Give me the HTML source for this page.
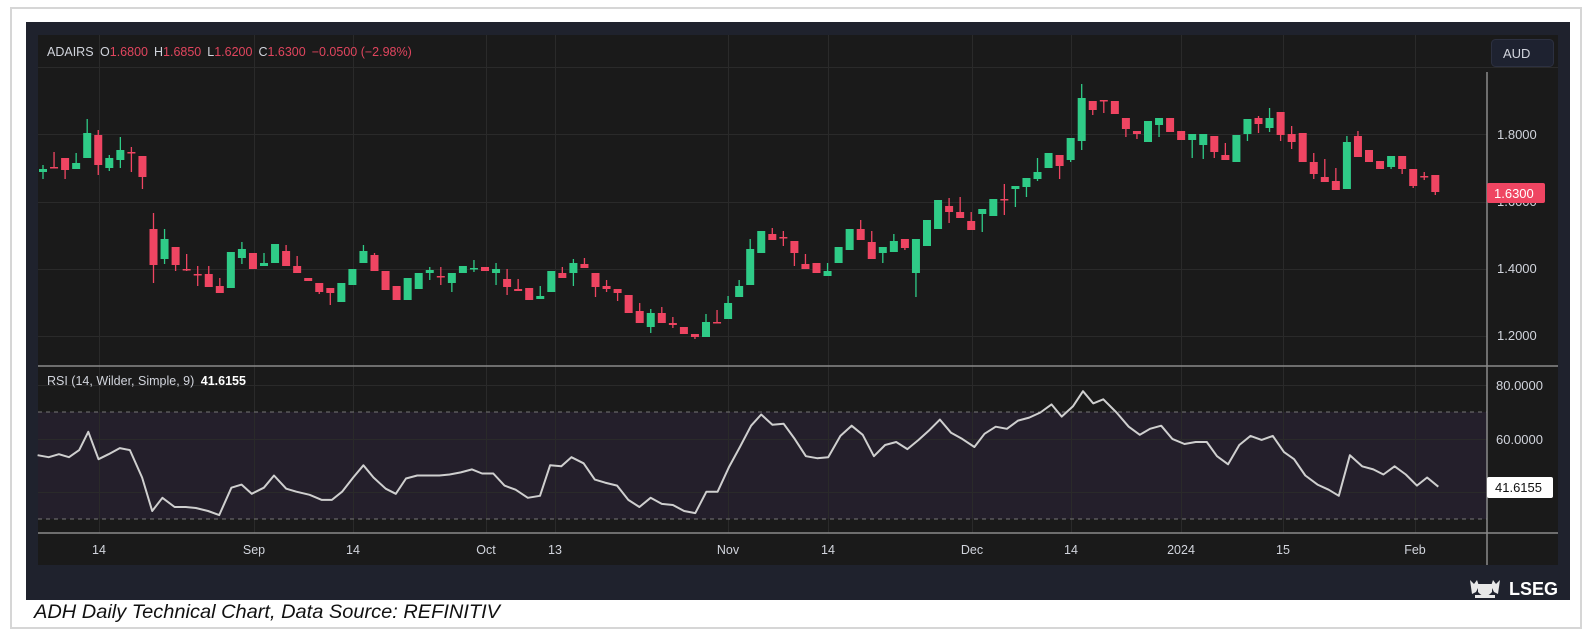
<!DOCTYPE html>
<html><head><meta charset="utf-8"><style>
html,body{margin:0;padding:0;background:#fff;}
svg{display:block;}
text{font-family:"Liberation Sans",sans-serif;}
</style></head><body>
<svg id="s" width="1592" height="639" viewBox="0 0 1592 639" xmlns="http://www.w3.org/2000/svg">
<rect x="0" y="0" width="1592" height="639" fill="#fff"/>
<rect x="11" y="8" width="1570" height="620" fill="#fff" stroke="#d6d6d6" stroke-width="2"/>
<rect x="26" y="22" width="1544" height="578" fill="#1f222d"/>
<rect x="38" y="35" width="1520" height="530" fill="#1a1a1a"/>
<rect x="38" y="412" width="1449" height="107" fill="#241f2b"/>
<g id="grid" stroke="#2a2a2a" stroke-width="1"></g>
<line x1="38" y1="67.5" x2="1558" y2="67.5" stroke="#2a2a2a"/>
<line x1="38" y1="412" x2="1487" y2="412" stroke="#777" stroke-dasharray="4,4"/>
<line x1="38" y1="519" x2="1487" y2="519" stroke="#777" stroke-dasharray="4,4"/>
<line x1="38" y1="366" x2="1558" y2="366" stroke="#8a8a8a" stroke-width="1.5"/>
<line x1="38" y1="533" x2="1558" y2="533" stroke="#8a8a8a" stroke-width="1.5"/>
<line x1="1487" y1="72" x2="1487" y2="565" stroke="#8a8a8a" stroke-width="1.5"/>
<g id="candles"></g>
<polyline id="rsi" fill="none" stroke="#cfcfcf" stroke-width="2" stroke-linejoin="round"/>
<text x="47" y="56" font-size="12.5" fill="#d1d4dc">ADAIRS <tspan dx="3">O</tspan><tspan fill="#e0455e">1.6800</tspan><tspan dx="6">H</tspan><tspan fill="#e0455e">1.6850</tspan><tspan dx="6">L</tspan><tspan fill="#e0455e">1.6200</tspan><tspan dx="6">C</tspan><tspan fill="#e0455e">1.6300</tspan><tspan dx="6" fill="#e0455e">−0.0500 (−2.98%)</tspan></text>
<rect x="1491.5" y="39.5" width="62" height="27" rx="4" fill="#1e2230" stroke="#2c3040"/>
<text x="1503" y="58" font-size="13" fill="#d1d4dc">AUD</text>
<g font-size="13" fill="#d1d4dc">
<text x="1497" y="139">1.8000</text>
<text x="1497" y="206">1.6000</text>
<text x="1497" y="273">1.4000</text>
<text x="1497" y="340">1.2000</text>
<text x="1496" y="390">80.0000</text>
<text x="1496" y="444">60.0000</text>
</g>
<rect x="1487" y="183" width="58" height="20" rx="2" fill="#ef4562"/>
<text x="1494" y="198" font-size="13" fill="#fff">1.6300</text>
<rect x="1487" y="477" width="66" height="21" rx="2" fill="#fff"/>
<text x="1495" y="492" font-size="13" fill="#111">41.6155</text>
<text x="47" y="385" font-size="12.5" fill="#d1d4dc">RSI (14, Wilder, Simple, 9) <tspan dx="3" fill="#fff" font-weight="bold">41.6155</tspan></text>
<g font-size="12.5" fill="#d1d4dc" text-anchor="middle">
<text x="99" y="554">14</text><text x="254" y="554">Sep</text><text x="353" y="554">14</text><text x="486" y="554">Oct</text>
<text x="555" y="554">13</text><text x="728" y="554">Nov</text><text x="828" y="554">14</text><text x="972" y="554">Dec</text>
<text x="1071" y="554">14</text><text x="1181" y="554">2024</text><text x="1283" y="554">15</text><text x="1415" y="554">Feb</text>
</g>
<g fill="#e8e8e8">
<path d="M1470 580 l4 4 l3 -4 l2 6 l-3 6 l-4 2 z"/>
<path d="M1500 580 l-4 4 l-3 -4 l-2 6 l3 6 l4 2 z"/>
<path d="M1478 584 h14 v8 q-7 8 -14 0 z"/>
<path d="M1475 595 h20 v3 h-20 z"/>
</g>
<text x="1509" y="595" font-size="18" font-weight="bold" fill="#fff">LSEG</text>
<text x="34" y="618" font-size="19" font-style="italic" fill="#111" textLength="466" lengthAdjust="spacingAndGlyphs">ADH Daily Technical Chart, Data Source: REFINITIV</text>
</svg>
<script>
var NS="http://www.w3.org/2000/svg";
var g=document.getElementById('grid');
function ln(x1,y1,x2,y2){var l=document.createElementNS(NS,'line');l.setAttribute('x1',x1);l.setAttribute('y1',y1);l.setAttribute('x2',x2);l.setAttribute('y2',y2);g.appendChild(l);}
[99,254,353,486,555,728,828,972,1071,1181,1283,1415].forEach(function(x){ln(x+.5,35,x+.5,533);});
[134,202,269,336,385,439,492].forEach(function(y){ln(38,y+.5,1487,y+.5);});
// [open, close, high, low] in pixel y
var C=[
[172,169,165,179],[167,167,152,167],[158,170,158,179],[169,163,153,169],[158,133,119,158],[135,165,130,175],[168,158,155,171],[160,150,137,168],[152,152,147,172],[156,177,156,189],
[229,265,213,283],[259,239,229,264],[247,265,247,271],[269,269,254,271],[274,274,266,286],[274,287,266,287],[286,293,278,293],[288,252,252,288],[258,249,242,264],[253,269,253,269],
[266,263,253,266],[263,244,244,263],[251,266,245,266],[266,273,256,273],[278,281,278,281],[283,292,283,294],[288,293,288,305],[302,283,283,302],[285,269,269,285],[263,251,245,263],
[255,271,253,271],[271,290,271,290],[286,300,286,300],[300,278,278,300],
[289,273,273,289],[273,270,267,280],[276,276,267,285],[283,273,273,292],[273,266,266,273],[269,268,260,272],[267,271,267,271],[273,269,263,285],[279,287,269,295],[289,291,279,291],
[288,300,288,300],[299,296,286,299],[292,271,271,292],[273,278,267,278],[273,263,259,286],[264,268,258,268],[273,287,273,297],[286,289,280,292],[289,293,289,301],[295,313,295,313],
[311,323,303,323],[327,313,309,333],[313,323,307,323],[323,325,317,328],[327,334,327,334],[334,337,334,339],[337,322,314,337],[322,322,310,323],[319,303,296,319],[297,286,280,297],
[285,249,239,285],[253,231,231,253],[234,240,228,240],[237,237,231,246],[241,253,241,266],[264,269,254,269],
[263,273,263,273],[276,271,263,276],[263,247,247,263],[250,229,229,250],[229,240,220,240],[242,259,231,259],[253,247,247,263],[252,241,234,252],[239,248,239,250],[273,239,239,297],
[246,220,220,246],[229,200,200,229],[206,212,198,223],[212,218,197,218],[221,230,212,230],[214,209,209,232],[216,199,199,216],[199,199,184,215],[189,186,186,207],[187,178,178,197],
[179,172,158,181],[168,153,153,168],[155,166,155,179],[160,138,138,162],[141,98,84,150],[101,110,101,115],[100,100,100,113],[101,114,101,114],[118,129,118,137],[131,134,131,139],
[142,121,121,142],[125,118,118,137],[118,132,118,132],[131,140,131,140],[140,134,134,158],[145,134,134,159],[136,152,136,158],[155,160,143,160],[162,135,135,162],
[134,119,119,141],[118,124,116,133],[128,118,108,132],[112,135,112,141],[134,142,126,149],[133,162,133,162],[162,174,153,179],[177,182,159,182],[181,190,168,190],[189,142,136,189],
[136,157,131,157],[150,162,150,162],[161,169,161,169],[167,156,156,169],[156,169,156,174],[169,186,169,188],[176,176,172,180],[175,192,175,195]
];
var cg=document.getElementById('candles');
C.forEach(function(c,i){
 var x=43+i*11.05;var up=c[1]<c[0];var col=up?'#2fcb87':'#ef4562';
 var top=Math.min(c[0],c[1]),bot=Math.max(c[0],c[1]);
 var hi=Math.min(c[2],top),lo=Math.max(c[3],bot);
 var w=document.createElementNS(NS,'line');w.setAttribute('x1',x);w.setAttribute('x2',x);w.setAttribute('y1',hi);w.setAttribute('y2',lo);w.setAttribute('stroke',col);w.setAttribute('stroke-width','1.3');cg.appendChild(w);
 var r=document.createElementNS(NS,'rect');r.setAttribute('x',x-4);r.setAttribute('width',8);r.setAttribute('y',top);r.setAttribute('height',Math.max(bot-top,1.5));r.setAttribute('fill',col);cg.appendChild(r);
});
var R=[37,448,48,450,58,447,68,450,78,443,87,425,97,452,107,447,118,441,128,443,140,470,150,503,160,490,172,499,183,499,193,500,205,503,216,507,228,480,238,477,248,486,260,480,270,468,282,481,292,484,305,487,317,492,327,492,337,484,348,470,358,458,368,470,380,481,390,486,400,471,411,468,422,468,433,468,443,467,454,465,465,462,475,466,486,466,497,478,508,482,520,490,532,488,542,458,553,459,563,450,575,456,586,472,596,475,608,478,619,492,630,499,641,490,652,496,663,497,674,503,685,505,696,484,707,484,718,460,729,440,740,419,750,408,761,418,772,417,783,432,794,449,805,451,816,450,828,429,839,419,850,428,861,449,872,438,883,435,894,442,905,433,915,424,926,413,937,426,948,432,960,440,970,427,981,420,992,422,1003,414,1014,411,1025,406,1036,398,1046,410,1057,400,1067,385,1077,397,1087,393,1100,406,1112,420,1123,428,1133,422,1144,419,1155,432,1167,437,1178,435,1189,435,1199,449,1210,457,1221,438,1232,429,1243,433,1254,429,1265,445,1275,452,1286,468,1298,477,1309,482,1319,488,1330,448,1342,459,1353,462,1363,467,1374,459,1385,467,1396,478,1406,470,1417,479];
var pts=[];for(var i=0;i<R.length;i+=2){pts.push((R[i]*1.015).toFixed(1)+','+(R[i+1]*1.016).toFixed(1));}
document.getElementById('rsi').setAttribute('points',pts.join(' '));
</script>
</body></html>
